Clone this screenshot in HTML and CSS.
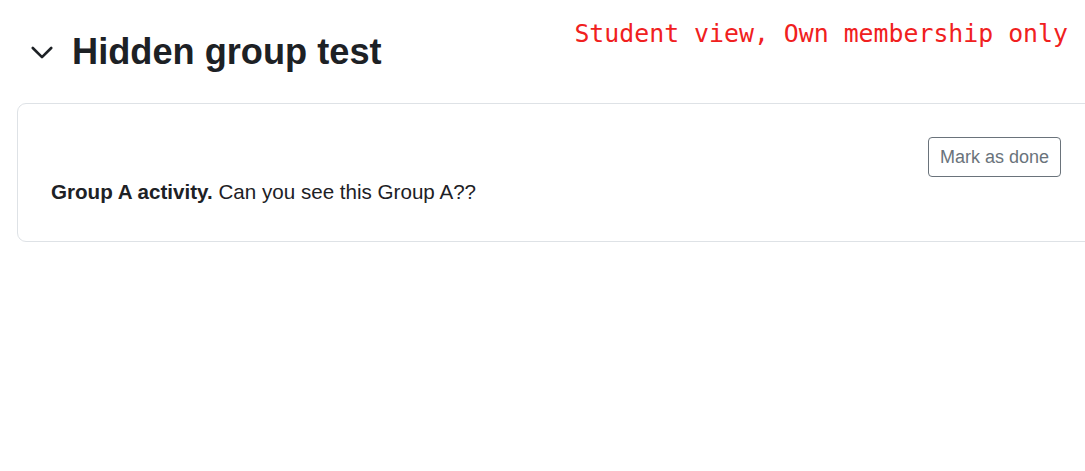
FILE: index.html
```html
<!DOCTYPE html>
<html lang="en">
<head>
    <meta charset="UTF-8">
    <meta name="viewport" content="width=device-width, initial-scale=1.0">
    <title>Hidden group test</title>
    <link rel="stylesheet" href="styles.css">
</head>
<body>
    <div class="view-note">Student view, Own membership only</div>

    <div class="section">
        <div class="section-header">
            <span class="toggle-icon">
                <svg width="22" height="22" viewBox="0 0 22 22">
                    <path d="M1.8 6 L11 15.2 L20.2 6" fill="none" stroke="#1d2125" stroke-width="2.6" stroke-linecap="round" stroke-linejoin="round"/>
                </svg>
            </span>
            <h1>Hidden group test</h1>
        </div>

        <div class="card">
            <div class="card-actions">
                <button type="button">Mark as done</button>
            </div>
            <p class="activity"><strong>Group A activity.</strong> Can you see this Group A??</p>
        </div>
    </div>
</body>
</html>
```

FILE: styles.css
```css
html, body {
    margin: 0;
    padding: 0;
    overflow: hidden;
}

body {
    font-family: "Liberation Sans", Arial, sans-serif;
    background-color: #fff;
    color: #1d2125;
    position: relative;
    width: 1085px;
    height: 471px;
}

.view-note {
    position: absolute;
    top: 19px;
    right: 17px;
    font-family: "DejaVu Sans Mono", monospace;
    font-size: 24.85px;
    color: #f02020;
    white-space: nowrap;
}

.section {
    padding: 29px 0 0 17px;
}

.section-header {
    display: flex;
    align-items: center;
    gap: 19px;
    padding-left: 14px;
    height: 46px;
}

.toggle-icon {
    display: flex;
    width: 22px;
    height: 22px;
    margin-top: 1px;
}

h1 {
    margin: 0;
    font-size: 36.2px;
    font-weight: bold;
    line-height: 46px;
}

.card {
    margin-top: 28px;
    width: 1078px;
    box-sizing: border-box;
    border: 1px solid #dee2e6;
    border-radius: 9px;
    padding: 33px 33px 34px 33px;
}

.card-actions {
    display: flex;
    justify-content: flex-end;
}

button {
    font-family: "Liberation Sans", Arial, sans-serif;
    font-size: 18px;
    color: #6a737b;
    background: #fff;
    border: 1px solid #6a737b;
    border-radius: 4px;
    height: 40px;
    padding: 0 11px;
    cursor: pointer;
}

.activity {
    margin: 0;
    font-size: 20.6px;
    line-height: 30px;
}
```
